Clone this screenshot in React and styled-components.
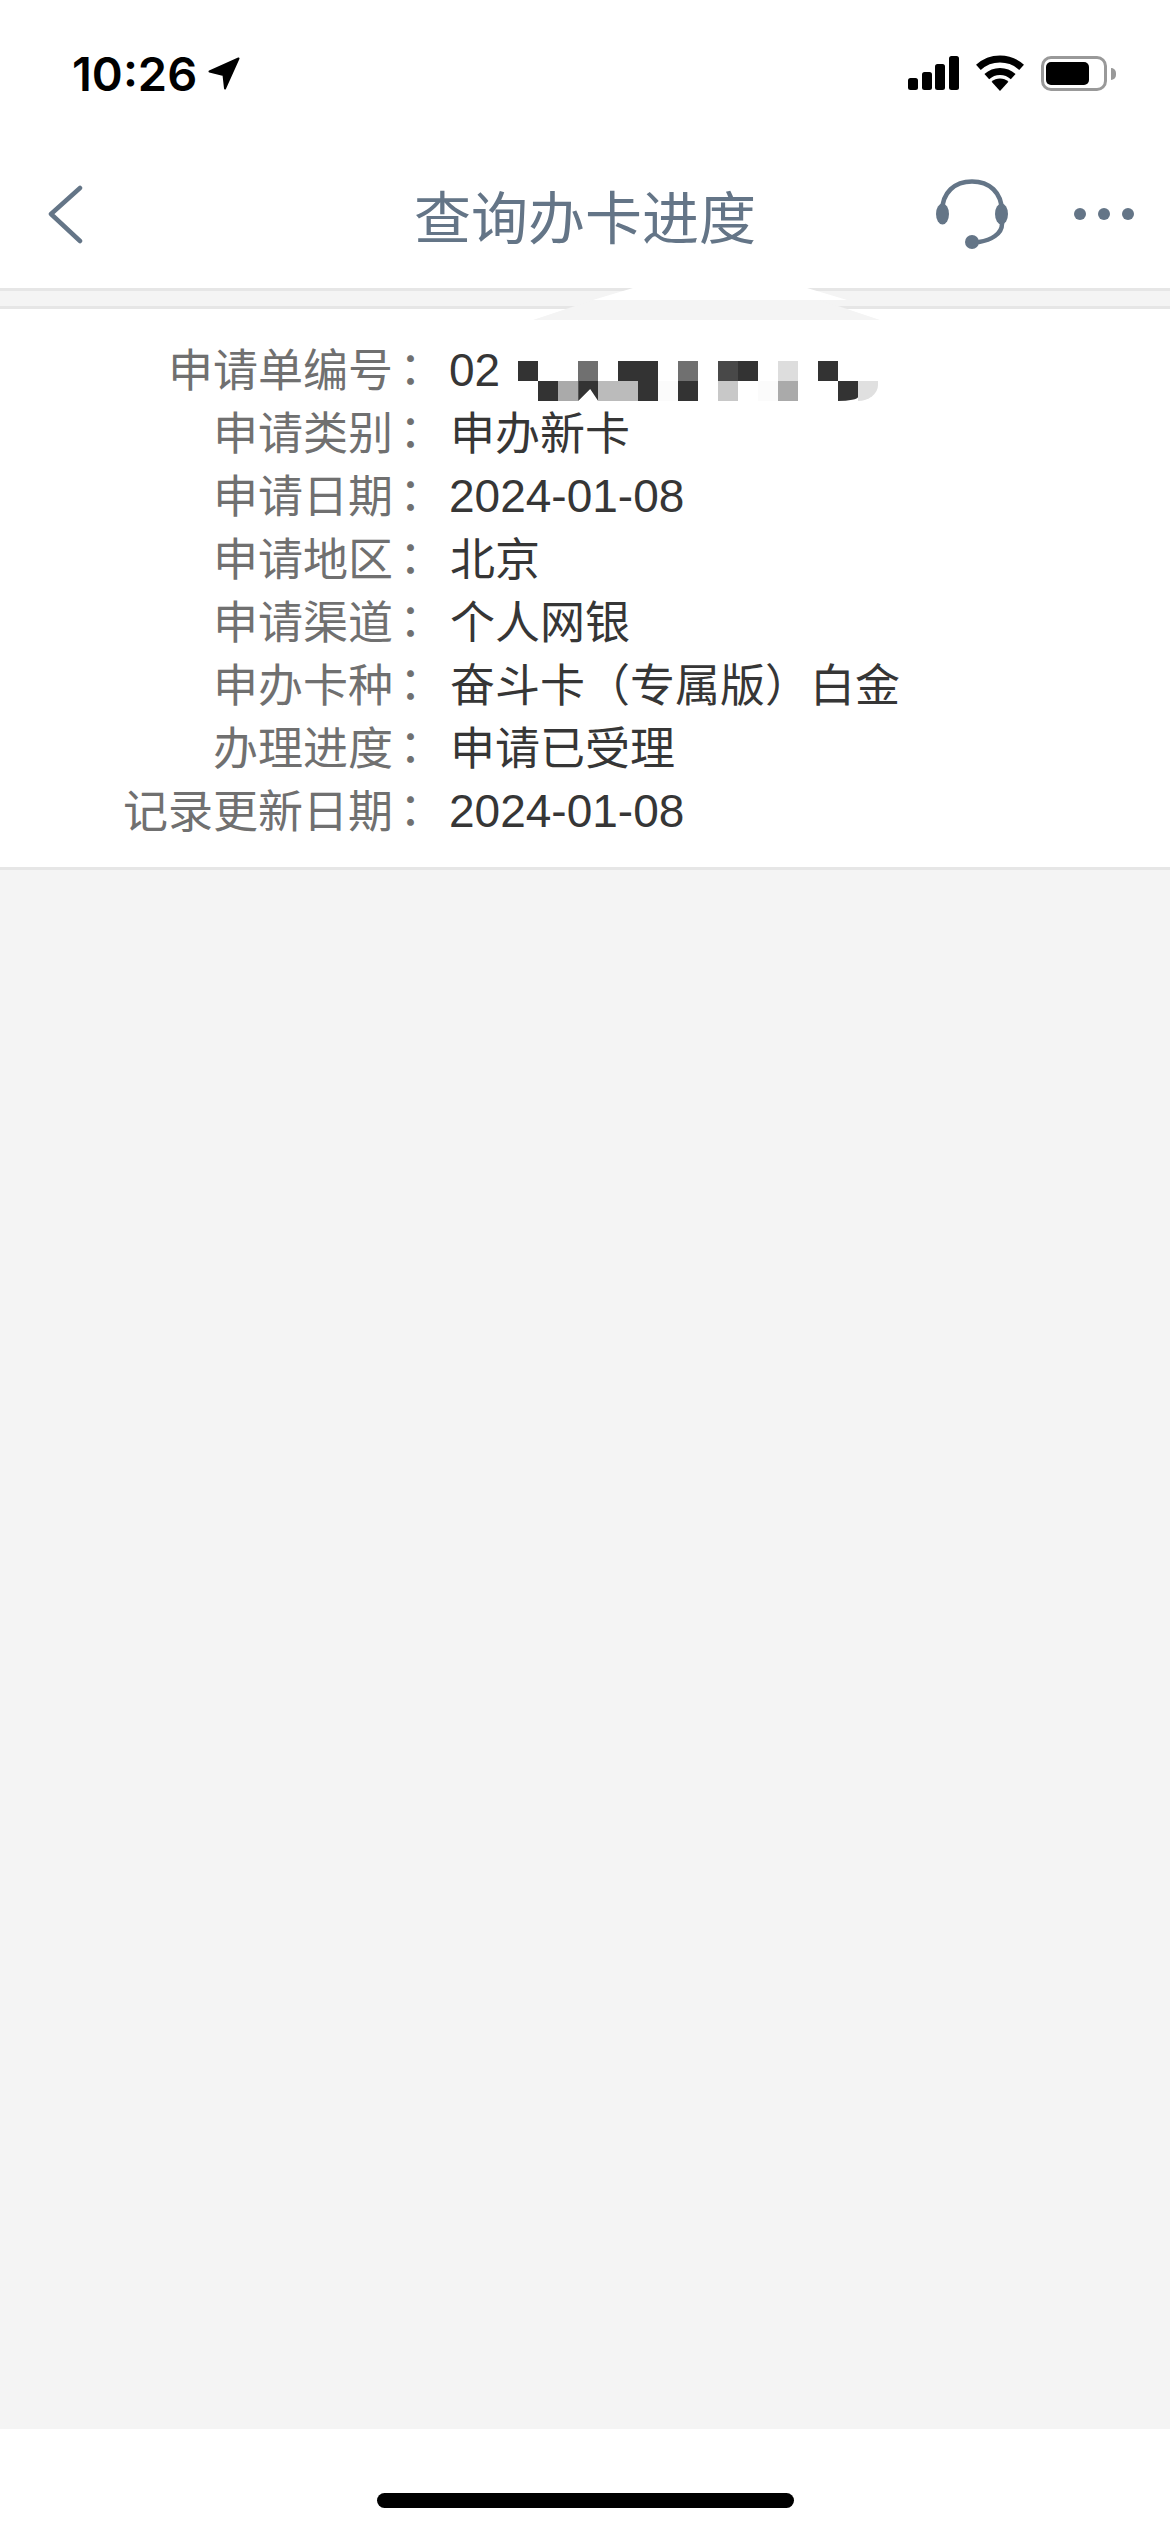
import React from "react";
import styled, { createGlobalStyle } from "styled-components";

const GlobalStyle = createGlobalStyle`
  * {
    box-sizing: border-box;
  }
  html, body {
    margin: 0;
    padding: 0;
    background: #fff;
  }
`;

const SLATE = "#647587";
const CJK = `"Noto Sans CJK SC", "Noto Sans", sans-serif`;

const Screen = styled.div`
  position: relative;
  width: 1170px;
  height: 2532px;
  display: flex;
  flex-direction: column;
  overflow: hidden;
  background: #fff;
`;

const Header = styled.header`
  flex: none;
  height: 291px;
  border-bottom: 3px solid #e6e6e6;
`;

const StatusBar = styled.div`
  height: 146px;
  padding: 0 63px 0 72px;
  display: flex;
  align-items: center;
  justify-content: space-between;
`;

const TimeGroup = styled.div`
  display: flex;
  align-items: center;
  gap: 11px;
`;

const Time = styled.span`
  font-family: Inter, "Liberation Sans", sans-serif;
  font-size: 47px;
  font-weight: 600;
  letter-spacing: 0;
  line-height: 1;
  color: #000;
`;

const StatusIcons = styled.div`
  display: flex;
  align-items: center;
  gap: 17px;
`;

const SignalBars = styled.div`
  display: flex;
  align-items: flex-end;
  gap: 3.6px;
  height: 34px;
`;

const SignalBar = styled.span`
  width: 10px;
  height: ${({ $h }) => $h}px;
  border-radius: 2.5px;
  background: #000;
`;

const Battery = styled.div`
  position: relative;
  width: 66px;
  height: 35px;
  padding: 3px 2px;
  border: 3px solid #999;
  border-radius: 10px;
`;

const BatteryFill = styled.div`
  width: 43px;
  height: 100%;
  border-radius: 5px;
  background: #000;
`;

const BatteryCap = styled.span`
  position: absolute;
  right: -12px;
  top: 9px;
  width: 5px;
  height: 12px;
  border-radius: 0 5px 5px 0;
  background: #999;
`;

const NavBar = styled.nav`
  height: 142px;
  padding-bottom: 6px;
  display: grid;
  grid-template-columns: 1fr auto 1fr;
  align-items: center;
`;

const NavTitle = styled.h1`
  margin: 0;
  font-family: ${CJK};
  font-size: 57px;
  font-weight: 400;
  line-height: 1;
  color: ${SLATE};
`;

const NavLeft = styled.div`
  padding-left: 47px;
  display: flex;
`;

const NavRight = styled.div`
  padding-right: 36px;
  display: flex;
  align-items: center;
  justify-content: flex-end;
  gap: 65px;
`;

const MoreDots = styled.div`
  display: flex;
  gap: 12px;
`;

const MoreDot = styled.span`
  width: 12px;
  height: 12px;
  border-radius: 50%;
  background: ${SLATE};
`;

const Content = styled.main`
  flex: 1;
  padding-top: 15px;
  background: #f4f4f4;
`;

const Card = styled.section`
  padding: 27px 0;
  border-top: 3px solid #e6e6e6;
  border-bottom: 3px solid #e6e6e6;
  background: #fff;
`;

const Row = styled.div`
  height: 63px;
  display: grid;
  grid-template-columns: 388px 45px 1fr;
  align-items: center;
  font-family: ${CJK};
  font-size: 45px;
  line-height: 63px;
`;

const Label = styled.span`
  margin-right: -5px;
  padding-bottom: 3px;
  text-align: right;
  font-weight: 400;
  color: #707070;
  white-space: nowrap;
`;

const Colon = styled.span`
  padding-bottom: 3px;
  font-family: "Noto Sans CJK TC", sans-serif;
  font-weight: 400;
  color: #707070;
`;

const Value = styled.span`
  display: flex;
  align-items: flex-start;
  padding: ${({ $latin }) => ($latin ? "3px 0 0 16px" : "0 0 3px 17px")};
  font-family: ${({ $latin }) => ($latin ? `"Liberation Sans", Arial, sans-serif` : CJK)};
  font-size: ${({ $latin }) => ($latin ? 46 : 45)}px;
  font-weight: 400;
  color: #363636;
  white-space: nowrap;
`;

// the part of the application number hidden behind a coarse mosaic
const Mosaic = styled.div`
  margin: 22px 0 0 18px;
  height: 40px;
  display: grid;
  grid-template-columns: repeat(18, 20px);
  grid-auto-rows: 20px;
`;

const MosaicCell = styled.span`
  background: ${({ $tone }) => $tone};
  border-bottom-right-radius: ${({ $corner }) => $corner || 0};
  clip-path: ${({ $notch }) =>
    $notch ? "polygon(0 0, 100% 0, 100% 100%, 60% 40%, 0 100%)" : "none"};
`;

// smudge left on the top of the card by an earlier edit of the capture
const Smudge = styled.div`
  position: absolute;
  left: ${({ $x }) => $x}px;
  top: ${({ $y }) => $y}px;
  width: ${({ $w }) => $w}px;
  height: ${({ $h }) => $h}px;
  background: ${({ $color }) => $color};
  clip-path: polygon(${({ $inset, $w }) => `${$inset}px 0, ${$w - $inset}px 0, 100% 100%, 0 100%`});
`;

const Footer = styled.footer`
  flex: none;
  height: 103px;
  padding-top: 64px;
  display: flex;
  justify-content: center;
  background: #fff;
`;

const HomeIndicator = styled.div`
  width: 417px;
  height: 15px;
  border-radius: 8px;
  background: #000;
`;

const D = "#333333";
const mosaicRows = [
  [D, 0, 0, "#707070", 0, D, D, 0, "#707070", 0, "#484848", D, 0, "#dddddd", 0, D, 0, 0],
  [0, D, "#aaaaaa", D, "#bbbbbb", "#bbbbbb", D, "#fbfbfb", D, 0, "#c8c8c8", 0, "#fbfbfb", "#aaaaaa", 0, 0, D, "#e0e0e0"],
];

const rows = [
  { label: "申请单编号", value: "02", latin: true, masked: true },
  { label: "申请类别", value: "申办新卡" },
  { label: "申请日期", value: "2024-01-08", latin: true },
  { label: "申请地区", value: "北京" },
  { label: "申请渠道", value: "个人网银" },
  { label: "申办卡种", value: "奋斗卡（专属版）白金" },
  { label: "办理进度", value: "申请已受理" },
  { label: "记录更新日期", value: "2024-01-08", latin: true },
];

function LocationArrow() {
  return (
    <svg width="32" height="33" viewBox="0 0 32 33">
      <path d="M30.5 1.5 1.5 14.5l14 3.5 1.5 13.5Z" fill="#000" stroke="#000" strokeWidth="2" strokeLinejoin="round" />
    </svg>
  );
}

function WifiIcon() {
  return (
    <svg width="48" height="36" viewBox="0 0 48 36" fill="none">
      <path d="M2.4 12.4A32 32 0 0 1 45.6 12.4" stroke="#000" strokeWidth="7" />
      <path d="M10.8 21.6A19.5 19.5 0 0 1 37.2 21.6" stroke="#000" strokeWidth="7" />
      <path d="M24 36 15.6 26.8A12.5 12.5 0 0 1 32.4 26.8Z" fill="#000" />
    </svg>
  );
}

function BackIcon() {
  return (
    <svg width="36" height="64" viewBox="0 0 36 64" fill="none">
      <path d="M33 6 4 32l29 27" stroke={SLATE} strokeWidth="4.5" strokeLinecap="round" strokeLinejoin="round" />
    </svg>
  );
}

function HeadsetIcon() {
  return (
    <svg width="74" height="72" viewBox="0 0 74 72" fill="none">
      <path d="M7 34C7 14 20 3.5 37 3.5S67 14 67 34v12C67 56 56 62 44 64" stroke={SLATE} strokeWidth="4.5" strokeLinecap="round" />
      <ellipse cx="7.5" cy="36" rx="6.5" ry="10.5" fill={SLATE} />
      <ellipse cx="66.5" cy="36" rx="6.5" ry="10.5" fill={SLATE} />
      <circle cx="37" cy="64" r="7" fill={SLATE} />
    </svg>
  );
}

export default function App() {
  return (
    <>
      <GlobalStyle />
      <Screen>
        <Header>
          <StatusBar>
            <TimeGroup>
              <Time>10:26</Time>
              <LocationArrow />
            </TimeGroup>
            <StatusIcons>
              <SignalBars>
                {[12, 18, 26, 34].map((h) => (
                  <SignalBar key={h} $h={h} />
                ))}
              </SignalBars>
              <WifiIcon />
              <Battery>
                <BatteryFill />
                <BatteryCap />
              </Battery>
            </StatusIcons>
          </StatusBar>
          <NavBar>
            <NavLeft>
              <BackIcon />
            </NavLeft>
            <NavTitle>查询办卡进度</NavTitle>
            <NavRight>
              <HeadsetIcon />
              <MoreDots>
                <MoreDot />
                <MoreDot />
                <MoreDot />
              </MoreDots>
            </NavRight>
          </NavBar>
        </Header>
        <Content>
          <Card>
            {rows.map((row) => (
              <Row key={row.label}>
                <Label>{row.label}</Label>
                <Colon>：</Colon>
                <Value $latin={row.latin}>
                  {row.value}
                  {row.masked && (
                    <Mosaic>
                      {mosaicRows.flatMap((cells, r) =>
                        cells.map((tone, c) => (
                          <MosaicCell
                            key={`${r}-${c}`}
                            $tone={tone || "transparent"}
                            $notch={r === 1 && c === 3}
                            $corner={r === 1 && c === 16 ? "20px 4px" : r === 1 && c === 17 ? "20px 16px" : undefined}
                          />
                        ))
                      )}
                    </Mosaic>
                  )}
                </Value>
              </Row>
            ))}
          </Card>
        </Content>
        <Footer>
          <HomeIndicator />
        </Footer>
        <Smudge $x={593} $y={288} $w={254} $h={12} $inset={40} $color="#ffffff" />
        <Smudge $x={533} $y={300} $w={347} $h={20} $inset={60} $color="#f4f4f4" />
      </Screen>
    </>
  );
}
